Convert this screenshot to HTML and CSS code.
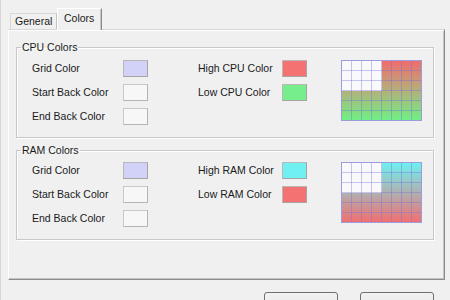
FILE: index.html
```html
<!DOCTYPE html>
<html>
<head>
<meta charset="utf-8">
<link rel="stylesheet" href="styles.css">
</head>
<body>
<div class="dialog">
  <div class="tabs">
    <div class="tab">General</div>
    <div class="tab active">Colors</div>
  </div>
  <div class="panel">
    <fieldset class="group">
      <legend>CPU Colors</legend>
      <div class="grid">
        <span class="lbl">Grid Color</span><span class="sw sw-grid"></span>
        <span class="lbl lbl2">High CPU Color</span><span class="sw sw-red"></span>
        <div class="graph graph-cpu"><div class="blank"></div></div>
        <span class="lbl">Start Back Color</span><span class="sw sw-back"></span>
        <span class="lbl lbl2">Low CPU Color</span><span class="sw sw-green"></span>
        <span class="lbl">End Back Color</span><span class="sw sw-back"></span>
      </div>
    </fieldset>
    <fieldset class="group ram">
      <legend>RAM Colors</legend>
      <div class="grid">
        <span class="lbl">Grid Color</span><span class="sw sw-grid"></span>
        <span class="lbl lbl2">High RAM Color</span><span class="sw sw-cyan"></span>
        <div class="graph graph-ram"><div class="blank"></div></div>
        <span class="lbl">Start Back Color</span><span class="sw sw-back"></span>
        <span class="lbl lbl2">Low RAM Color</span><span class="sw sw-red"></span>
        <span class="lbl">End Back Color</span><span class="sw sw-back"></span>
      </div>
    </fieldset>
  </div>
  <div class="buttons">
    <button class="btn">OK</button>
    <button class="btn">Cancel</button>
  </div>
</div>
</body>
</html>
```
FILE: styles.css
```css
html, body {
  margin: 0;
  padding: 0;
  background: #f0f0f0;
  overflow: hidden;
}
body {
  font-family: "Liberation Sans", Arial, sans-serif;
  font-size: 10.5px;
  color: #1a1a1a;
  width: 450px;
  height: 300px;
  box-sizing: border-box;
  border-left: 1px solid #d4d4d4;
}
.dialog {
  padding: 9px 5px 0 7px;
}
.tabs {
  display: flex;
  align-items: flex-end;
  height: 20px;
  padding-left: 2px;
  position: relative;
  z-index: 1;
}
.tab {
  box-sizing: border-box;
  height: 16px;
  width: 47px;
  border: 1px solid #d9d9d9;
  border-bottom: none;
  border-right-color: #c4c4c4;
  padding-left: 4px;
  line-height: 15px;
  background: #f0f0f0;
}
.tab.active {
  height: 22px;
  width: 45px;
  margin-bottom: -1px;
  padding-left: 6px;
  padding-top: 1px;
  line-height: 17px;
  border-color: #ffffff;
  border-right: 1px solid #8a8a8a;
  box-shadow: inset -1px 0 0 #c8c8c8;
}
.panel {
  box-sizing: border-box;
  height: 251px;
  border: 1px solid;
  border-color: #d6d6d6 #8c8c8c #8c8c8c #ffffff;
  box-shadow: inset 0 1px 0 #ffffff, inset -1px -1px 0 #c4c4c4;
  padding: 11px 10px 0 7px;
}
.group {
  margin: 0;
  padding: 2px 0 9px 0;
  border: 1px solid #c8c8c8;
  box-shadow: 1px 1px 0 #ffffff, inset 1px 1px 0 #ffffff;
  min-width: 0;
}
.group.ram {
  margin-top: 6px;
  padding-top: 1px;
}
legend {
  padding: 0 1px;
  margin-left: 4px;
  line-height: 13px;
}
.grid {
  display: grid;
  grid-template-columns: 91px 25px 50px 84px 25px 34px 80px;
  grid-template-rows: 24px 24px 24px;
  align-items: center;
  padding-left: 15px;
}
.lbl {
  grid-column: 1;
  white-space: nowrap;
}
.lbl2 {
  grid-column: 4;
}
.sw {
  box-sizing: border-box;
  height: 17px;
  width: 25px;
  border: 1px solid #b8b8b8;
  border-right-color: #a4a4a4;
  border-bottom-color: #a4a4a4;
}
.sw-grid { background: #d2d2f8; }
.sw-back { background: #f7f7f7; border-color: #c8c8c8 #b4b4b4 #b4b4b4 #c8c8c8; }
.sw-red { background: #f47272; }
.sw-green { background: #76ee8c; }
.sw-cyan { background: #70f0f0; }
.graph {
  grid-column: 7;
  grid-row: 1 / span 3;
  align-self: start;
  margin-top: 4px;
  box-sizing: border-box;
  width: 81px;
  height: 61px;
  border: 1px solid #9c9cdc;
  position: relative;
}
.graph::after {
  content: "";
  position: absolute;
  inset: 0;
  background-image:
    repeating-linear-gradient(to right, transparent 0 9px, rgba(110, 110, 220, 0.38) 9px 10px),
    repeating-linear-gradient(to bottom, transparent 0 9px, rgba(110, 110, 220, 0.38) 9px 10px);
}
.blank {
  width: 40px;
  height: 30px;
  background: #f9f9fb;
}
.graph-cpu { background: linear-gradient(to bottom, #f06c6c, #b4b07a 50%, #70f084); }
.graph-ram { background: linear-gradient(to bottom, #6ef0f0, #b0b0b0 50%, #f07070); }
.buttons {
  display: flex;
  justify-content: flex-end;
  gap: 22px;
  padding: 12px 11px 0 0;
}
.btn {
  box-sizing: border-box;
  width: 74px;
  height: 23px;
  font-family: "Liberation Sans", Arial, sans-serif;
  font-size: 10.5px;
  color: #1a1a1a;
  border: 1px solid #707070;
  border-radius: 3px;
  background: linear-gradient(to bottom, #f2f2f2 0%, #ebebeb 50%, #dddddd 51%, #cfcfcf 100%);
  padding: 0;
}
```
